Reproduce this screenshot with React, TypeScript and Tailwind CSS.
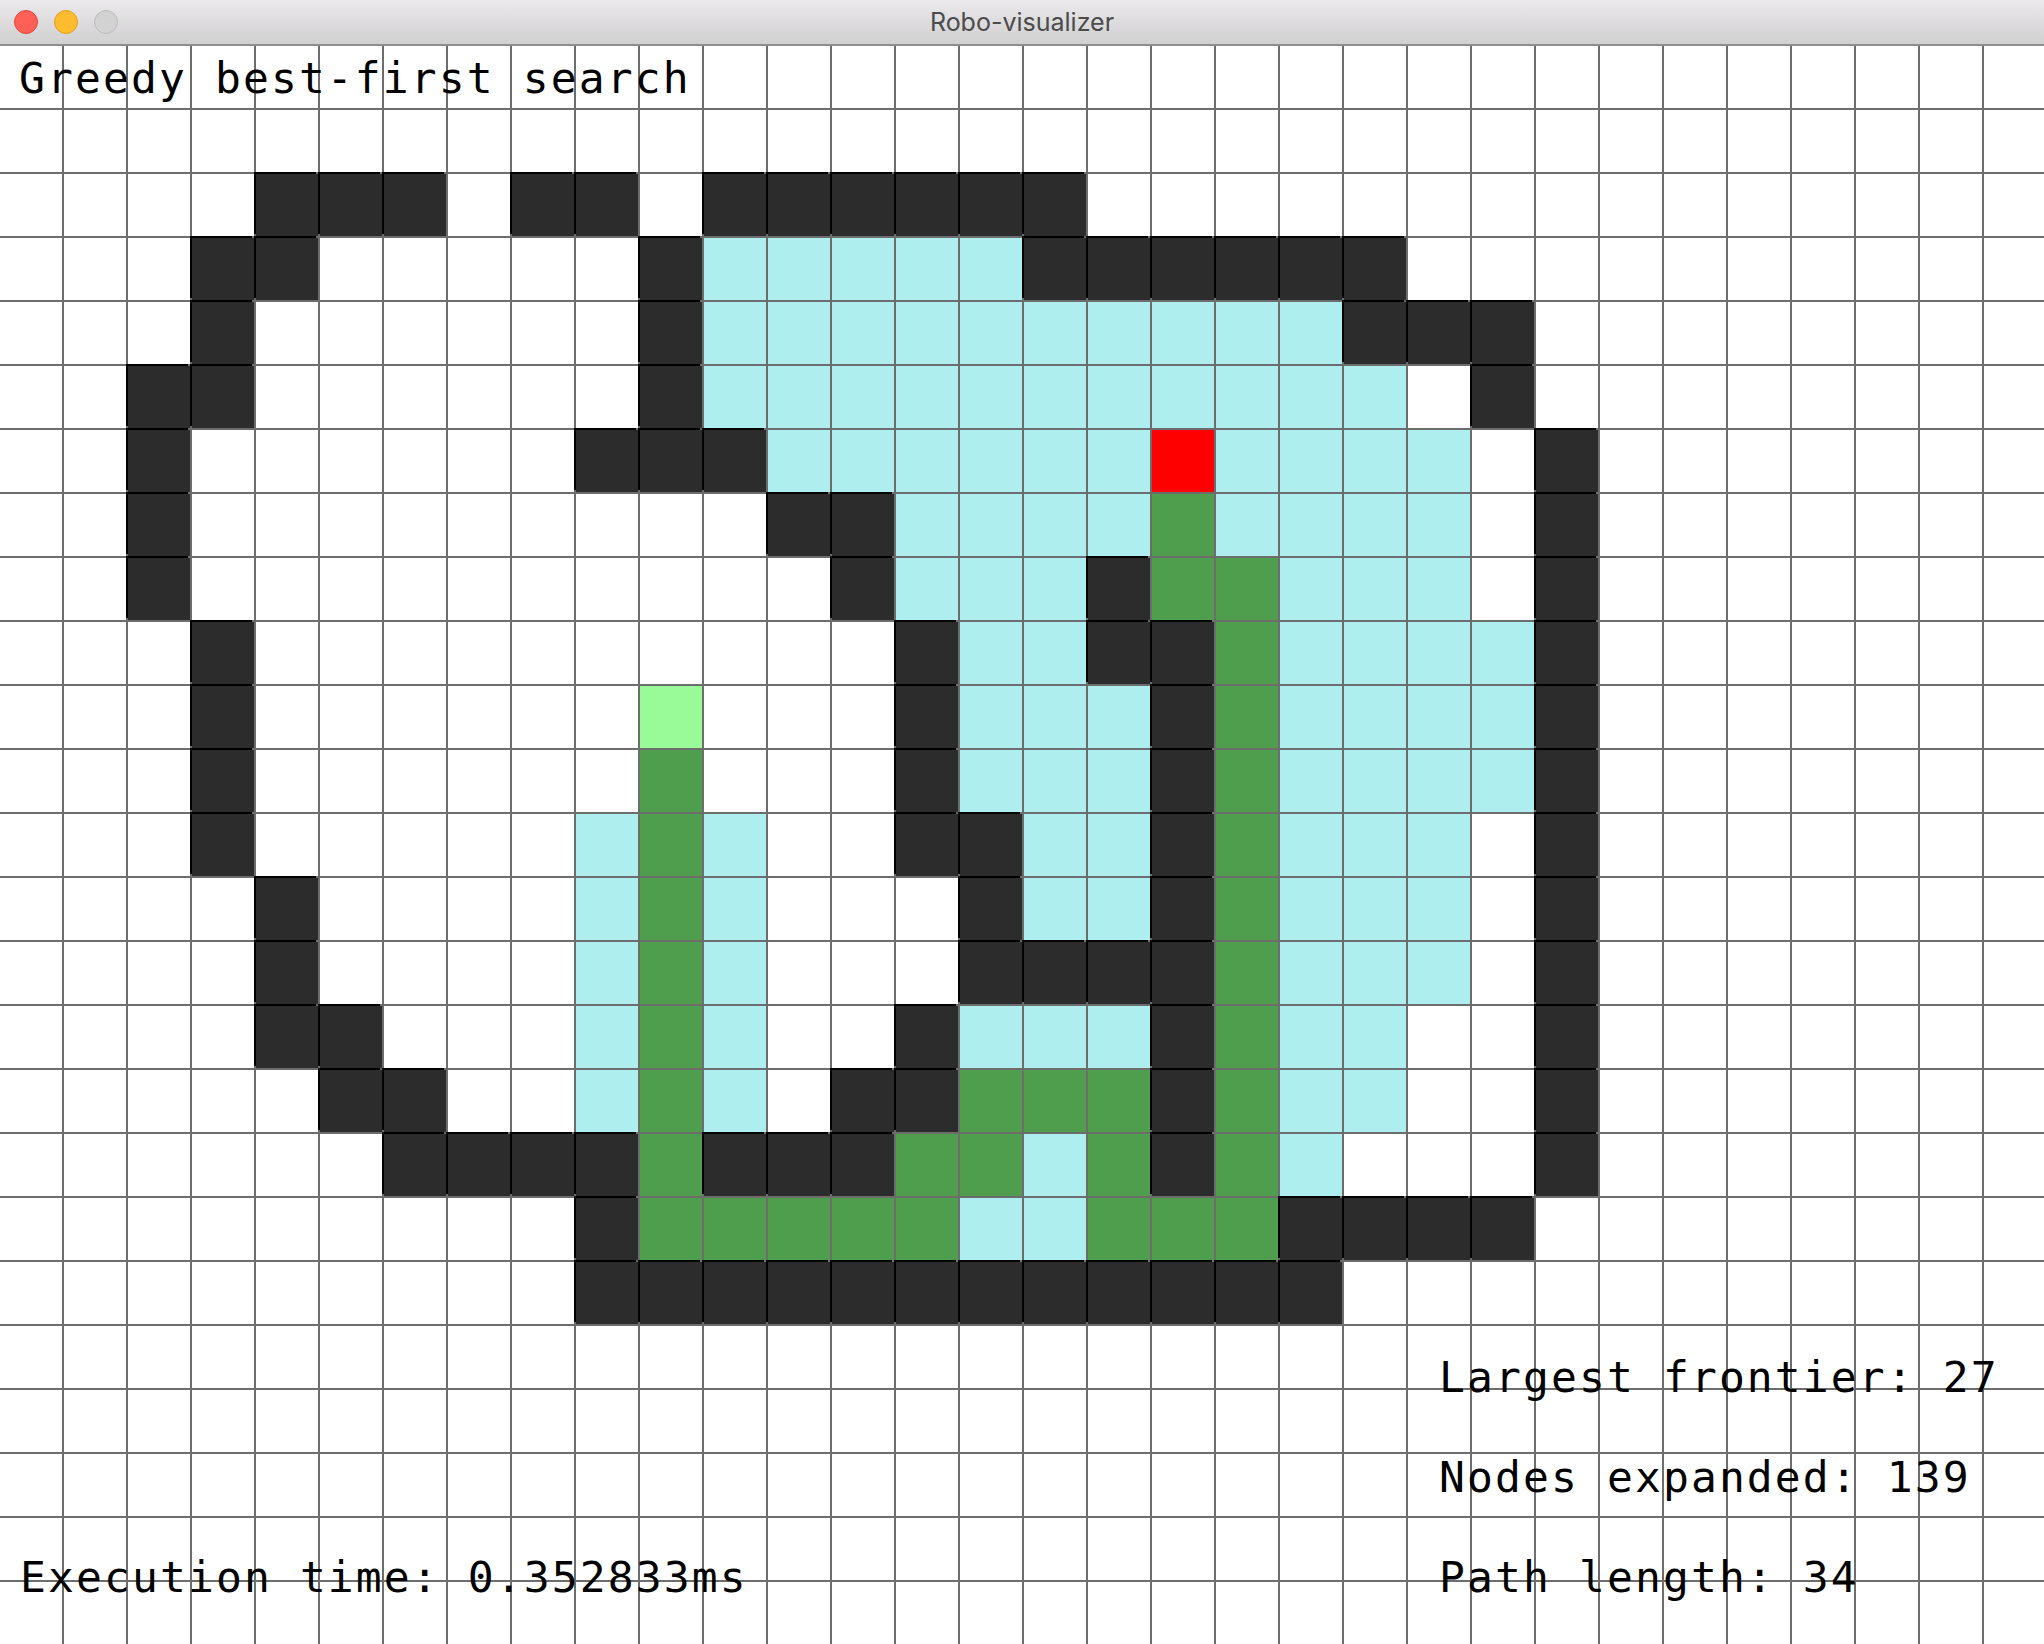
import React from "react";

const MAP: string[] = [
  "................................",
  "................................",
  "....###.##.######...............",
  "...##.....#bbbbb######..........",
  "...#......#bbbbbbbbbb###........",
  "..##......#bbbbbbbbbbb.#........",
  "..#......###bbbbbbrbbbb.#.......",
  "..#.........##bbbbgbbbb.#.......",
  "..#..........#bbb#ggbbb.#.......",
  "...#..........#bb##gbbbb#.......",
  "...#......s...#bbb#gbbbb#.......",
  "...#......g...#bbb#gbbbb#.......",
  "...#.....bgb..##bb#gbbb.#.......",
  "....#....bgb...#bb#gbbb.#.......",
  "....#....bgb...####gbbb.#.......",
  "....##...bgb..#bbb#gbb..#.......",
  ".....##..bgb.##ggg#gbb..#.......",
  "......####g###ggbg#gb...#.......",
  ".........#gggggbbggg####........",
  ".........############...........",
  "................................",
  "................................",
  "................................",
  "................................",
  "................................",
];

const CELL: Record<string, string> = {
  ".": "bg-white",
  "#": "bg-[#2c2c2c] shadow-[-2px_-2px_0_0_#000000]",
  b: "bg-[#afeeee]",
  g: "bg-[#4e9e4e]",
  r: "bg-[#ff0000]",
  s: "bg-[#98fb98]",
};

function TitleBar() {
  return (
    <div className="h-[46px] w-full grid grid-cols-[1fr_auto_1fr] items-center bg-gradient-to-b from-[#ebe9eb] to-[#d1d0d1] border-b-2 border-[#8e8e8e]">
      <div className="flex items-center gap-[16px] pl-[14px]">
        <span className="w-[24px] h-[24px] rounded-full bg-[#fe5f57] border border-[#e2463f]" />
        <span className="w-[24px] h-[24px] rounded-full bg-[#febc2e] border border-[#e1a116]" />
        <span className="w-[24px] h-[24px] rounded-full bg-[#d3d2d3] border border-[#bcbbbc]" />
      </div>
      <div className="text-[25px] leading-none text-[#4b4b4b] font-['Inter','Liberation_Sans',sans-serif]">
        Robo-visualizer
      </div>
      <div />
    </div>
  );
}

const textCls =
  "absolute whitespace-pre text-black text-[43px] leading-[50px] tracking-[2.1px] font-['DejaVu_Sans_Mono','Liberation_Mono',monospace]";

export default function App() {
  return (
    <div className="relative w-[2044px] h-[1644px] overflow-hidden bg-white">
      <TitleBar />
      <div className="grid grid-cols-[repeat(32,62px)] grid-rows-[repeat(25,62px)] gap-[2px] bg-[#6d6d6d] w-[2046px]">
        {MAP.map((row, r) =>
          row.split("").map((ch, c) => (
            <div key={`${r}-${c}`} className={CELL[ch]} />
          ))
        )}
      </div>
      <div className={`${textCls} left-[19px] top-[53px]`}>Greedy best-first search</div>
      <div className={`${textCls} left-[20px] top-[1552px]`}>Execution time: 0.352833ms</div>
      <div className={`${textCls} left-[1439px] top-[1352px]`}>Largest frontier: 27</div>
      <div className={`${textCls} left-[1439px] top-[1452px]`}>Nodes expanded: 139</div>
      <div className={`${textCls} left-[1439px] top-[1552px]`}>Path length: 34</div>
    </div>
  );
}
